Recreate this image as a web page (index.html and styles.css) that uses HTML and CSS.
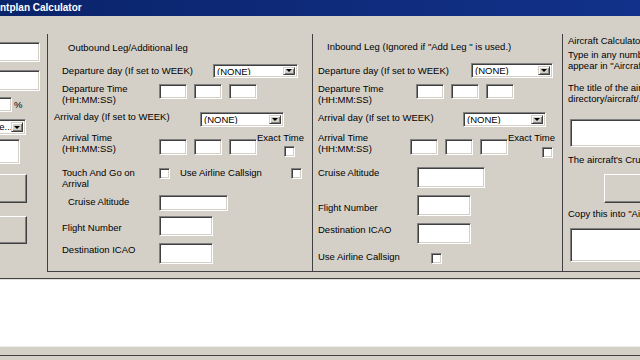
FILE: index.html
```html
<!DOCTYPE html>
<html lang="en">
<head>
    <meta charset="UTF-8">
    <title>Flightplan Calculator</title>
    <link rel="stylesheet" href="styles.css">
</head>
<body>
    <div class="titlebar">ntplan Calculator</div>

    <div class="client">
        <div class="side">
            <div class="edit side-edit"></div>
            <div class="edit side-edit side-edit-2"></div>
            <div class="pct-row">
                <div class="edit pct-edit"></div>
                <span class="pct">%</span>
            </div>
            <div class="combo side-combo"><span class="combo-text">Type...</span><span class="drop"></span></div>
            <div class="edit side-box"></div>
            <div class="button side-btn"></div>
            <div class="button side-btn side-btn-2"></div>
        </div>

        <div class="group outbound">
            <div class="g-title">Outbound Leg/Additional leg</div>
            <div class="row r1">
                <span class="lbl">Departure day (If set to WEEK)</span>
                <div class="combo"><span class="combo-text">(NONE)</span><span class="drop"></span></div>
            </div>
            <div class="row r2">
                <span class="lbl">Departure Time<br>(HH:MM:SS)</span>
                <div class="times">
                    <div class="edit time"></div>
                    <div class="edit time"></div>
                    <div class="edit time"></div>
                </div>
            </div>
            <div class="row r3">
                <span class="lbl">Arrival day (If set to WEEK)</span>
                <div class="combo"><span class="combo-text">(NONE)</span><span class="drop"></span></div>
            </div>
            <div class="row r4">
                <span class="lbl">Arrival Time<br>(HH:MM:SS)</span>
                <div class="times">
                    <div class="edit time"></div>
                    <div class="edit time"></div>
                    <div class="edit time"></div>
                </div>
                <div class="exact">
                    <span>Exact Time</span>
                    <div class="check"></div>
                </div>
            </div>
            <div class="row r5">
                <span class="lbl">Touch And Go on<br>Arrival</span>
                <div class="check"></div>
                <span class="callsign">Use Airline Callsign</span>
                <div class="check"></div>
            </div>
            <div class="row r6">
                <span class="lbl">Cruise Altitude</span>
                <div class="edit"></div>
            </div>
            <div class="row r7">
                <span class="lbl">Flight Number</span>
                <div class="edit"></div>
            </div>
            <div class="row r8">
                <span class="lbl">Destination ICAO</span>
                <div class="edit"></div>
            </div>
        </div>

        <div class="group inbound">
            <div class="g-title">Inbound Leg (Ignored if "Add Leg " is used.)</div>
            <div class="row r1">
                <span class="lbl">Departure day (If set to WEEK)</span>
                <div class="combo"><span class="combo-text">(NONE)</span><span class="drop"></span></div>
            </div>
            <div class="row r2">
                <span class="lbl">Departure Time<br>(HH:MM:SS)</span>
                <div class="times">
                    <div class="edit time"></div>
                    <div class="edit time"></div>
                    <div class="edit time"></div>
                </div>
            </div>
            <div class="row r3">
                <span class="lbl">Arrival day (If set to WEEK)</span>
                <div class="combo"><span class="combo-text">(NONE)</span><span class="drop"></span></div>
            </div>
            <div class="row r4">
                <span class="lbl">Arrival Time<br>(HH:MM:SS)</span>
                <div class="times">
                    <div class="edit time"></div>
                    <div class="edit time"></div>
                    <div class="edit time"></div>
                </div>
                <div class="exact">
                    <span>Exact Time</span>
                    <div class="check"></div>
                </div>
            </div>
            <div class="row r5">
                <span class="lbl">Cruise Altitude</span>
                <div class="edit"></div>
            </div>
            <div class="row r6">
                <span class="lbl">Flight Number</span>
                <div class="edit"></div>
            </div>
            <div class="row r7">
                <span class="lbl">Destination ICAO</span>
                <div class="edit"></div>
            </div>
            <div class="row r8">
                <span class="lbl">Use Airline Callsign</span>
                <div class="check"></div>
            </div>
        </div>

        <div class="group aircraft">
            <div class="t1">Aircraft Calculator</div>
            <div class="t2">Type in any number of the aircraft as they<br>appear in "Aircraft.cfg"</div>
            <div class="t3">The title of the aircraft as found in your FS<br>directory/aircraft/.../aircraft.cfg</div>
            <div class="edit ac-box"></div>
            <div class="t4">The aircraft's Cruise Speed</div>
            <div class="button ac-btn">Calculate</div>
            <div class="t5">Copy this into "Aircraft.txt"</div>
            <div class="edit ac-box ac-box-2"></div>
        </div>
    </div>

    <div class="output"></div>
    <div class="statusbar"></div>
</body>
</html>
```

FILE: styles.css
```css
* {
    box-sizing: border-box;
}

body {
    margin: 0;
    width: 640px;
    height: 360px;
    overflow: hidden;
    background-color: #d4d0c8;
    font-family: "Liberation Sans", Arial, sans-serif;
    font-size: 9.5px;
    line-height: 11px;
    color: #000;
}

.titlebar {
    height: 16px;
    background: linear-gradient(90deg, #0a246a, #12318a);
    color: #fff;
    font-size: 10px;
    font-weight: bold;
    line-height: 16px;
    white-space: nowrap;
}

.client {
    display: flex;
    height: 263px;
    border-bottom: 1px solid #404040;
    overflow: hidden;
}

/* classic 3d controls */
.edit {
    background-color: #fff;
    border: 1px solid;
    border-color: #808080 #fff #fff #808080;
    box-shadow: inset 1px 1px #404040, inset -1px -1px #d4d0c8;
}

.check {
    flex: 0 0 11px;
    width: 11px;
    height: 11px;
    background-color: #fff;
    border: 1px solid;
    border-color: #808080 #fff #fff #808080;
    box-shadow: inset 1px 1px #404040, inset -1px -1px #d4d0c8;
}

.button {
    background-color: #d4d0c8;
    border: 1px solid;
    border-color: #fff #404040 #404040 #fff;
    box-shadow: inset -1px -1px #808080;
}

.combo {
    display: flex;
    align-items: stretch;
    padding: 2px;
    background-color: #fff;
    border: 1px solid;
    border-color: #808080 #fff #fff #808080;
    box-shadow: inset 1px 1px #404040, inset -1px -1px #d4d0c8;
}

.combo-text {
    flex: 1;
    padding-left: 1px;
    line-height: 10px;
    white-space: nowrap;
    overflow: hidden;
}

.drop {
    flex: 0 0 12px;
    display: flex;
    align-items: center;
    justify-content: center;
    background-color: #d4d0c8;
    border: 1px solid;
    border-color: #d4d0c8 #404040 #404040 #d4d0c8;
    box-shadow: inset 1px 1px #fff, inset -1px -1px #808080;
}

.drop::after {
    content: "";
    border-left: 3px solid transparent;
    border-right: 3px solid transparent;
    border-top: 3px solid #000;
}

/* left strip (cut off by the screenshot) */
.side {
    flex: 0 0 47px;
    display: flex;
    flex-direction: column;
    align-items: flex-start;
}

.side-edit {
    width: 60px;
    height: 20px;
    margin: 26px 0 0 -20px;
}

.side-edit-2 {
    height: 21px;
    margin-top: 8px;
}

.pct-row {
    display: flex;
    align-items: center;
    height: 15px;
    margin-top: 6px;
}

.pct-edit {
    width: 30px;
    height: 15px;
    margin-left: -18px;
}

.pct {
    margin-left: 2px;
}

.side-combo {
    width: 46px;
    height: 16px;
    margin: 7px 0 0 -20px;
}

.side-box {
    width: 40px;
    height: 25px;
    margin: 4px 0 0 -20px;
}

.side-btn {
    width: 60px;
    height: 29px;
    margin: 10px 0 0 -33px;
}

.side-btn-2 {
    height: 28px;
    margin-top: 13px;
}

/* group panels */
.group {
    flex: 0 0 auto;
    display: flex;
    flex-direction: column;
    margin-top: 18px;
    height: 238px;
    border-left: 1px solid #404040;
    border-bottom: 1px solid #404040;
}

.outbound {
    width: 265px;
}

.inbound {
    width: 250px;
}

.aircraft {
    width: 200px;
    padding-left: 5px;
    white-space: nowrap;
}

.g-title {
    height: 12px;
    line-height: 12px;
    white-space: nowrap;
}

.row {
    display: flex;
    align-items: flex-start;
}

.lbl {
    flex: 0 0 auto;
    white-space: nowrap;
}

.times {
    display: flex;
    gap: 7px;
}

.time {
    width: 28px;
}

.exact {
    white-space: nowrap;
}

/* outbound leg */
.outbound .g-title {
    margin-top: 8px;
    padding-left: 20px;
}

.outbound .lbl {
    width: 111px;
    padding-left: 14px;
}

.outbound .r1 {
    margin-top: 9px;
    height: 15px;
    align-items: center;
}

.outbound .r1 .lbl {
    width: 165px;
}

.outbound .r1 .combo {
    width: 85px;
    height: 14px;
}

.outbound .r2 {
    margin-top: 5px;
    height: 22px;
}

.outbound .r2 .times {
    margin-top: 1px;
}

.outbound .r2 .time {
    height: 15px;
}

.outbound .r3 {
    margin-top: 6px;
    height: 16px;
}

.outbound .r3 .lbl {
    width: 152px;
    padding-left: 6px;
}

.outbound .r3 .combo {
    width: 84px;
    height: 15px;
    margin-top: 1px;
}

.outbound .r4 {
    margin-top: 5px;
    height: 25px;
}

.outbound .r4 .times {
    margin-top: 7px;
}

.outbound .r4 .time {
    height: 16px;
}

.outbound .exact {
    width: 45px;
}

.outbound .exact .check {
    margin: 3px 0 0 27px;
}

.outbound .r5 {
    margin-top: 10px;
    height: 22px;
}

.outbound .r5 .check {
    margin-top: 1px;
}

.callsign {
    width: 111px;
    margin-left: 10px;
    white-space: nowrap;
}

.outbound .r6 {
    margin-top: 6px;
    height: 16px;
}

.outbound .r6 .lbl {
    padding-left: 20px;
    margin-top: 1px;
}

.outbound .r6 .edit {
    width: 69px;
    height: 16px;
}

.outbound .r7 {
    margin-top: 5px;
    height: 20px;
}

.outbound .r7 .lbl {
    margin-top: 6px;
}

.outbound .r7 .edit {
    width: 54px;
    height: 20px;
}

.outbound .r8 {
    margin-top: 7px;
    height: 21px;
}

.outbound .r8 .lbl {
    margin-top: 1px;
}

.outbound .r8 .edit {
    width: 54px;
    height: 21px;
}

/* inbound leg */
.inbound .g-title {
    margin-top: 7px;
    padding-left: 14px;
}

.inbound .lbl {
    padding-left: 5px;
}

.inbound .r1 {
    margin-top: 10px;
    height: 15px;
    align-items: center;
}

.inbound .r1 .lbl {
    width: 158px;
}

.inbound .r1 .combo {
    width: 82px;
    height: 15px;
}

.inbound .r2 {
    margin-top: 5px;
    height: 22px;
}

.inbound .r2 .lbl {
    width: 103px;
}

.inbound .r2 .times {
    margin-top: 1px;
}

.inbound .r2 .time {
    height: 15px;
}

.inbound .r3 {
    margin-top: 6px;
    height: 16px;
}

.inbound .r3 .lbl {
    width: 150px;
    margin-top: 1px;
}

.inbound .r3 .combo {
    width: 83px;
    height: 15px;
    margin-top: 1px;
}

.inbound .r4 {
    margin-top: 5px;
    height: 25px;
}

.inbound .r4 .lbl {
    width: 97px;
}

.inbound .r4 .times {
    margin-top: 7px;
}

.inbound .r4 .time {
    height: 16px;
}

.inbound .exact {
    width: 46px;
}

.inbound .exact .check {
    margin: 4px 0 0 34px;
}

.inbound .r5,
.inbound .r6,
.inbound .r7 {
    height: 21px;
}

.inbound .r5 {
    margin-top: 10px;
}

.inbound .r6,
.inbound .r7,
.inbound .r8 {
    margin-top: 7px;
}

.inbound .r5 .lbl,
.inbound .r6 .lbl,
.inbound .r7 .lbl {
    width: 104px;
}

.inbound .r5 .edit {
    width: 68px;
    height: 21px;
}

.inbound .r6 .lbl {
    margin-top: 7px;
}

.inbound .r7 .lbl {
    margin-top: 1px;
}

.inbound .r6 .edit,
.inbound .r7 .edit {
    width: 54px;
    height: 21px;
}

.inbound .r8 {
    height: 13px;
}

.inbound .r8 .lbl {
    width: 118px;
}

.inbound .r8 .check {
    margin-top: 2px;
}

/* aircraft calculator */
.t1 {
    margin-top: 1px;
}

.t2 {
    margin-top: 3px;
}

.t3 {
    margin-top: 11px;
}

.ac-box {
    width: 120px;
    height: 28px;
    margin: 15px 0 0 2px;
}

.ac-box-2 {
    height: 34px;
    margin-top: 9px;
}

.t4 {
    margin-top: 7px;
}

.ac-btn {
    width: 160px;
    height: 29px;
    margin: 9px 0 0 36px;
    line-height: 27px;
    text-align: center;
}

.t5 {
    margin-top: 5px;
}

/* bottom */
.output {
    height: 67px;
    background-color: #fff;
    border-top: 1px solid #e4e2dc;
}

.statusbar {
    height: 10px;
    border-top: 1px solid #f0eee8;
    border-bottom: 1px solid #404040;
}
```
